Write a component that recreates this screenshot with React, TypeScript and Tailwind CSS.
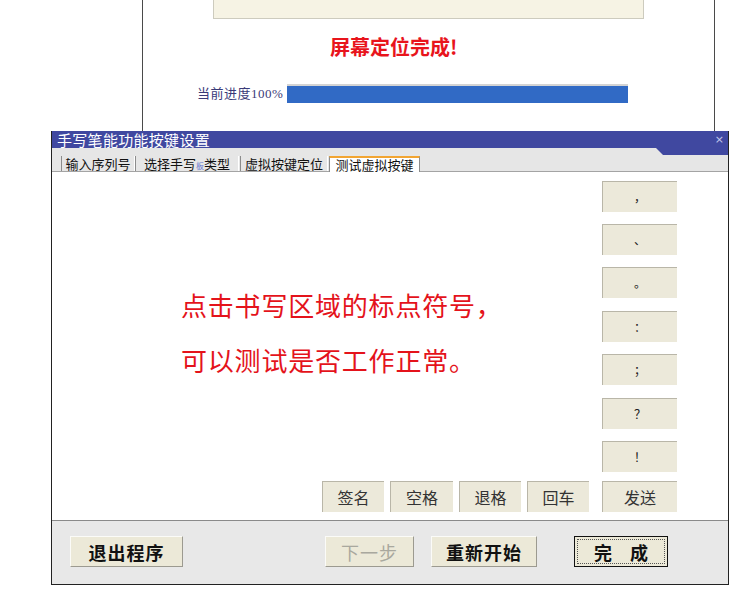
import React from "react";

const cjk = "font-['Noto_Sans_CJK_SC','Noto_Sans',sans-serif]";

function XpBtn({
  children,
  className = "",
}: {
  children: React.ReactNode;
  className?: string;
}) {
  return (
    <div
      className={`h-[31px] bg-[#ece9da] border-t border-l border-t-[#b9b6a8] border-l-[#b9b6a8] flex items-center justify-center ${className}`}
    >
      {children}
    </div>
  );
}

function BigBtn({
  children,
  className = "",
}: {
  children: React.ReactNode;
  className?: string;
}) {
  return (
    <div
      className={`h-[31px] bg-[#ece9d8] border border-t-[#fbfbf8] border-l-[#fbfbf8] border-r-[#9c9a90] border-b-[#9c9a90] flex items-center justify-center text-[18px] leading-none ${className}`}
    >
      {children}
    </div>
  );
}

export default function App() {
  const punct = ["，", "、", "。", "：", "；", "？", "！"];
  const gaps = ["mt-0", "mt-[12px]", "mt-[12px]", "mt-[13px]", "mt-[12px]", "mt-[13px]", "mt-[12px]"];
  return (
    <div className={`w-[751px] h-[599px] bg-white overflow-hidden ${cjk}`}>
      {/* Background window */}
      <div className="ml-[142px] w-[573px] h-[131px] border-x border-[#4a4a4a] flex flex-col">
        <div className="ml-[70px] w-[431px] h-[19px] bg-[#f6f3e4] border border-t-0 border-[#cdcbbe]" />
        <div className="ml-[187px] mt-[15px] text-[20px] font-bold text-[#e8141c] leading-[26px]">
          屏幕定位完成!
        </div>
        <div className="mt-[24px] flex items-center h-[19px]">
          <div className="ml-[54px] w-[90px] whitespace-nowrap text-[13px] leading-[19px] text-[#3a3a78] font-['Liberation_Serif','Noto_Sans_CJK_SC',serif] tracking-[0.5px]">
            当前进度100%
          </div>
          <div className="w-[341px] h-[19px] border-t-2 border-[#d4d4d4] bg-[#316ac5]" />
        </div>
      </div>

      {/* Dialog */}
      <div className="ml-[51px] w-[678px] h-[454px] border-x border-b border-[#222] flex flex-col">
        {/* Title bar */}
        <div className="h-[17px] bg-[#4048a0] flex items-center justify-between">
          <div className="ml-[5px] text-white text-[15px] leading-[17px] tracking-[0.3px]">
            手写笔能功能按键设置
          </div>
          <div className="mr-[4px] text-[11px] leading-[17px] text-[#c4c8ea] font-['DejaVu_Sans',sans-serif]">
            ×
          </div>
        </div>

        {/* Tab strip */}
        <div className="h-[24px] bg-[#e6e6e6] border-b border-[#a4a4a4] flex">
          <div className="flex-1 flex items-end pl-[9px] text-[13px] text-[#111] whitespace-nowrap">
            <div className="h-[15px] leading-[15px] border-l border-r border-l-[#8c8c8c] border-r-[#ffffff] w-[74px] text-center">
              输入序列号
            </div>
            <div className="h-[15px] leading-[15px] border-l border-r border-l-[#8c8c8c] border-r-[#ffffff] w-[104px] text-center">
              选择手写<span className="text-[8px] text-[#6a7ad0]">板</span>类型
            </div>
            <div className="ml-[1px] h-[15px] leading-[15px] border-l border-r border-l-[#8c8c8c] border-r-[#ffffff] w-[88px] text-center">
              虚拟按键定位
            </div>
            <div className="ml-[1px] h-[16px] mb-[-1px] leading-[14px] bg-white border-t-2 border-t-[#f2a532] border-x border-x-[#8c8c8c] w-[91px] text-center">
              测试虚拟按键
            </div>
          </div>
          <div className="w-[72px] self-start">
            <svg width="72" height="7" className="block">
              <polygon points="0,0 72,0 72,7 7,7" fill="#4048a0" />
            </svg>
          </div>
        </div>

        {/* Content */}
        <div className="h-[348px] bg-white flex flex-col">
          <div className="flex pt-[9px] h-[300px]">
            <div className="flex-1 pl-[129px] pt-[96px] text-[26px] leading-[55px] text-[#e4131b] tracking-[0.8px] whitespace-nowrap">
              <div>点击书写区域的标点符号，</div>
              <div>可以测试是否工作正常。</div>
            </div>
            <div className="w-[75px] mr-[51px] flex flex-col">
              {punct.map((p, i) => (
                <XpBtn key={p} className={`${gaps[i]} text-[12px] text-[#222]`}>
                  {p}
                </XpBtn>
              ))}
            </div>
          </div>
          <div className="mt-[9px] flex justify-end mr-[51px] text-[16px] text-[#333]">
            <XpBtn className="w-[62px]">签名</XpBtn>
            <XpBtn className="w-[63px] ml-[6px]">空格</XpBtn>
            <XpBtn className="w-[62px] ml-[6px]">退格</XpBtn>
            <XpBtn className="w-[62px] ml-[6px]">回车</XpBtn>
            <XpBtn className="w-[75px] ml-[13px]">发送</XpBtn>
          </div>
        </div>

        {/* Bottom panel */}
        <div className="flex-1 bg-[#e8e8e8] border-t border-[#8a8a8a] flex items-start pt-[15px] pl-[18px]">
          <BigBtn className="w-[113px] font-bold text-[#111] tracking-[1px]">退出程序</BigBtn>
          <BigBtn className="w-[89px] ml-[142px] text-[#a9a89e] tracking-[1px]">下一步</BigBtn>
          <BigBtn className="w-[106px] ml-[17px] font-bold text-[#111] tracking-[1px]">重新开始</BigBtn>
          <div className="ml-[37px] w-[94px] h-[31px] border border-[#111] bg-[#ece9d8] p-[2px]">
            <div className="w-full h-full border border-dotted border-[#555] flex items-center justify-center text-[18px] font-bold text-[#111] leading-none">
              完<span className="inline-block w-[18px]" />成
            </div>
          </div>
        </div>
      </div>
    </div>
  );
}
